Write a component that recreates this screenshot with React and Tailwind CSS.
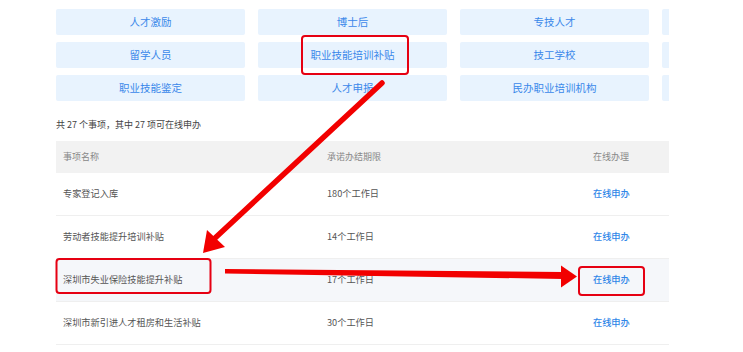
const categories = [
  "人才激励",
  "博士后",
  "专技人才",
  "",
  "留学人员",
  "职业技能培训补贴",
  "技工学校",
  "",
  "职业技能鉴定",
  "人才申报",
  "民办职业培训机构",
  "",
];

const rows = [
  { name: "专家登记入库", limit: "180个工作日" },
  { name: "劳动者技能提升培训补贴", limit: "14个工作日" },
  { name: "深圳市失业保险技能提升补贴", limit: "17个工作日", active: true },
  { name: "深圳市新引进人才租房和生活补贴", limit: "30个工作日" },
];

const Annotations = () => (
  <svg
    className="absolute left-0 top-0 pointer-events-none"
    width="743"
    height="352"
    viewBox="0 0 743 352"
  >
    {/* boxes */}
    <rect x="302" y="36" width="106" height="38" rx="3" fill="none" stroke="#e60012" strokeWidth="2" />
    <rect x="56.5" y="259" width="154" height="34" rx="3" fill="none" stroke="#e60012" strokeWidth="2" />
    <rect x="579" y="267" width="65" height="28" rx="3" fill="none" stroke="#e60012" strokeWidth="2" />
    {/* diagonal arrow */}
    <line x1="382" y1="83" x2="214" y2="239" stroke="#f20000" strokeWidth="5.5" strokeLinecap="round" />
    <polygon points="203,253 207,230 225,247" fill="#f20000" />
    {/* horizontal arrow */}
    <polygon points="225,269 563,272 563,279 225,273.5" fill="#f20000" />
    <polygon points="577,276.5 561,265.5 561,287.5" fill="#f20000" />
  </svg>
);

export default function App() {
  return (
    <div
      className="relative w-[743px] h-[352px] bg-white overflow-hidden"
      style={{ fontFamily: '"Noto Sans CJK SC", "Noto Sans", sans-serif' }}
    >
      <div className="ml-[56px] w-[613px] overflow-hidden pt-[9px]">
        <div className="grid grid-cols-[189px_189px_189px_189px] gap-x-[13px] gap-y-[7px] w-[795px]">
          {categories.map((c, i) => (
            <div
              key={i}
              className="h-[26px] bg-[#e8f3fe] rounded-[2px] flex items-center justify-center text-[10.5px] text-[#3a88ea]"
            >
              {c}
            </div>
          ))}
        </div>

        <div className="mt-[17px] h-[13px] leading-[13px] text-[9px] text-[#444]">
          共 27 个事项，其中 27 项可在线申办
        </div>

        <div className="mt-[10px]">
          <div className="grid grid-cols-[264px_266px_1fr] h-[32px] items-center px-[7px] bg-[#f2f2f2] text-[9px] text-[#888]">
            <div>事项名称</div>
            <div>承诺办结期限</div>
            <div>在线办理</div>
          </div>
          {rows.map((r) => (
            <div
              key={r.name}
              className={`grid grid-cols-[264px_266px_1fr] h-[43px] items-center px-[7px] border-b border-[#efefef] text-[9.2px] text-[#555] ${
                r.active ? "bg-[#f5f7fa]" : "bg-white"
              }`}
            >
              <div>{r.name}</div>
              <div>{r.limit}</div>
              <div className="text-[#2f86e8] font-medium">在线申办</div>
            </div>
          ))}
        </div>
      </div>
      <Annotations />
    </div>
  );
}
